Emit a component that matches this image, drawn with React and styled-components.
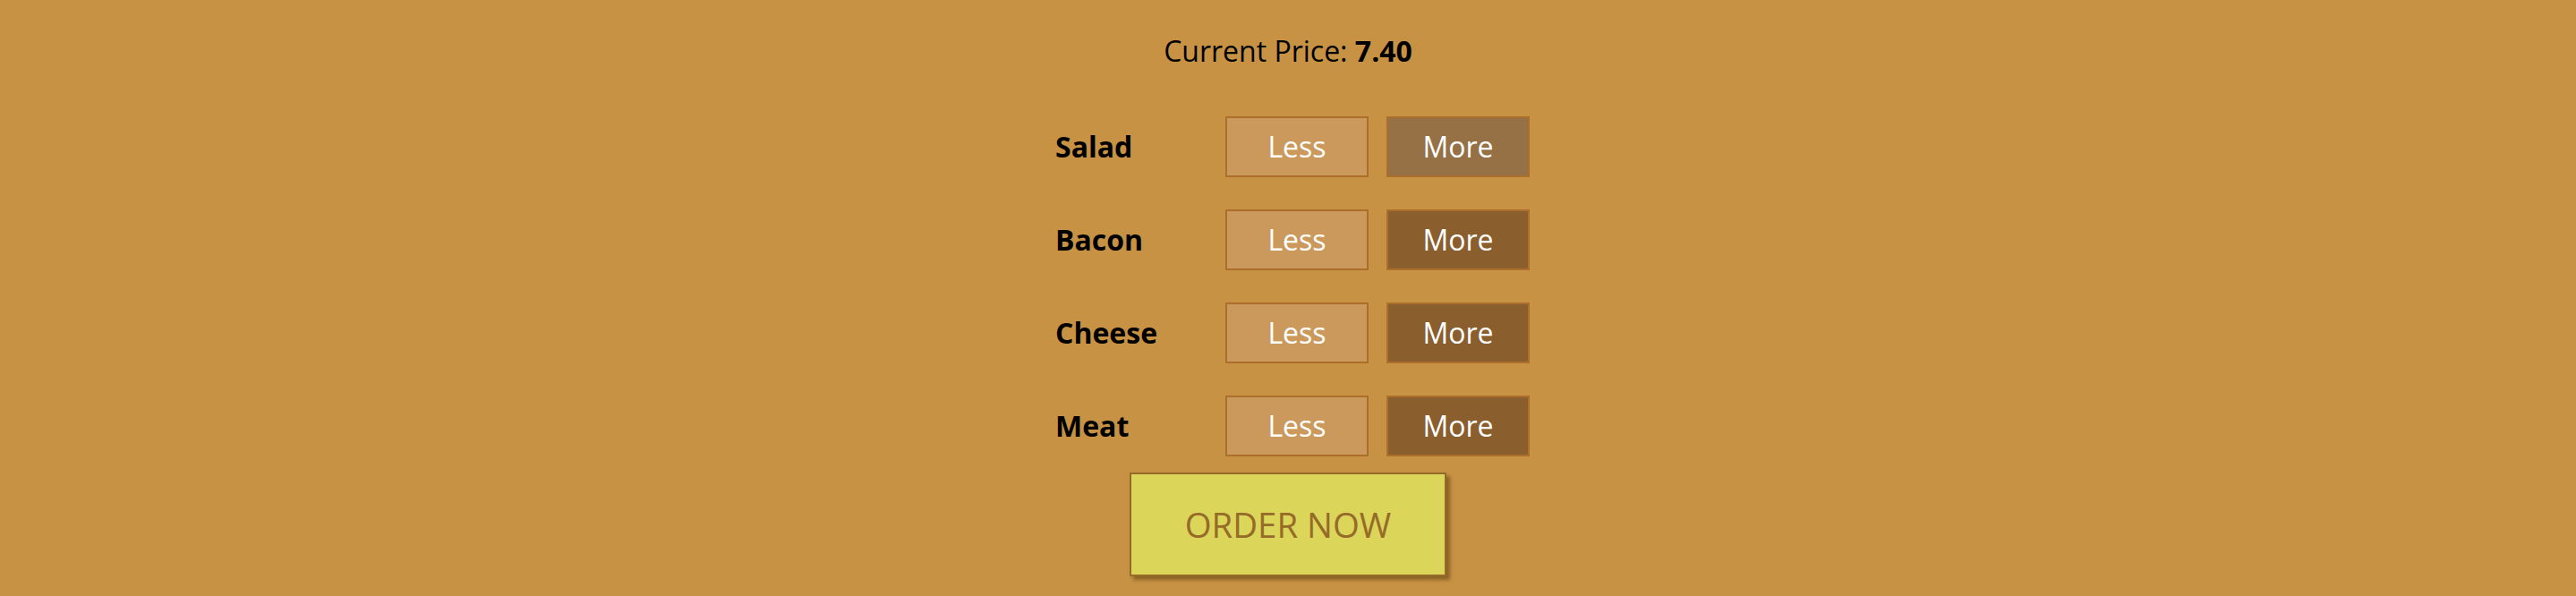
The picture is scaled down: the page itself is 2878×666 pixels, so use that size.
import React, { useState } from 'react';
import styled, { createGlobalStyle } from 'styled-components';

const GlobalStyle = createGlobalStyle`
  html, body {
    margin: 0;
    padding: 0;
    height: 100%;
    overflow: hidden;
    background-color: #c79244;
  }
  body {
    font-family: 'Open Sans', 'Noto Sans', sans-serif;
    font-size: 32px;
  }
`;

const controls = [
  { label: 'Salad', type: 'salad' },
  { label: 'Bacon', type: 'bacon' },
  { label: 'Cheese', type: 'cheese' },
  { label: 'Meat', type: 'meat' },
];

function BuildControl({ label, hovered }) {
  return (
    <Control>
      <Label>{label}</Label>
      <Less>Less</Less>
      <More hovered={hovered}>More</More>
    </Control>
  );
}

function App() {
  const [price] = useState(7.4);

  return (
    <>
      <GlobalStyle />
      <Controls>
        <Price>
          Current Price: <strong>{price.toFixed(2)}</strong>
        </Price>
        {controls.map((ctrl, index) => (
          <BuildControl key={ctrl.type} label={ctrl.label} hovered={index === 0} />
        ))}
        <OrderButton>ORDER NOW</OrderButton>
      </Controls>
    </>
  );
}

export default App;

const Controls = styled.div`
  width: 100%;
  box-sizing: border-box;
  background-color: #c79244;
  display: flex;
  flex-flow: column;
  align-items: center;
  padding: 35px 0 20px;
`;

const Price = styled.p`
  margin: 0 0 33px;
  font-size: 32px;
  line-height: 44px;
  color: #000;

  strong {
    font-weight: 700;
  }
`;

const Control = styled.div`
  display: flex;
  justify-content: space-between;
  align-items: center;
  margin: 10px 0;
`;

const Label = styled.div`
  padding: 20px;
  width: 160px;
  font-weight: 700;
  line-height: 44px;
  color: #000;
`;

const ControlButton = styled.button`
  display: block;
  box-sizing: border-box;
  font: inherit;
  line-height: 44px;
  padding: 10px;
  margin: 0 10px;
  width: 160px;
  border: 2px solid #ac6e2b;
  color: #fff;
  cursor: pointer;
  outline: none;
`;

const Less = styled(ControlButton)`
  background-color: #cc995c;
`;

const More = styled(ControlButton)`
  background-color: ${(props) => (props.hovered ? '#967146' : '#8b5e2d')};
`;

const OrderButton = styled.button`
  background-color: #dbd55a;
  outline: none;
  cursor: pointer;
  border: 2px solid #966b29;
  color: #966b29;
  font-family: inherit;
  font-size: 38.4px;
  padding: 30px 60px;
  box-shadow: 4px 4px 4px #8a6224;
`;
